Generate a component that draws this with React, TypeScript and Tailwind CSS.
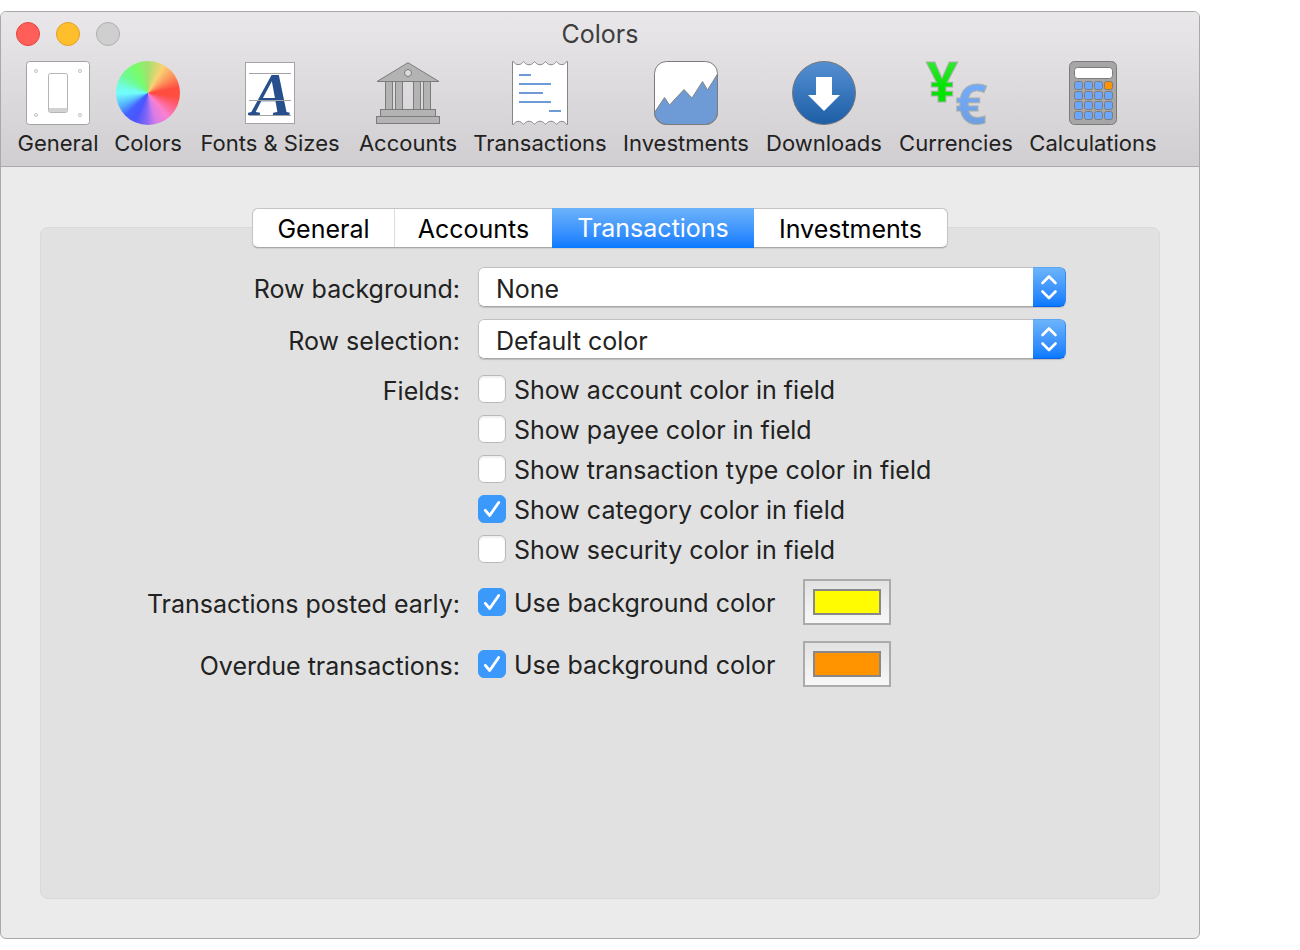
import { useState, type ReactNode } from "react";

function GeneralIcon() {
  return (
    <svg width="64" height="64" viewBox="0 0 64 64" fill="#fff" stroke="#a3a3a3" aria-hidden="true">
      <rect x="0.5" y="0.5" width="63" height="63" rx="3" />
      <g fill="#efefef" stroke="#c9c9c9">
        <circle cx="10" cy="10" r="1.6" />
        <circle cx="54" cy="10" r="1.6" />
        <circle cx="10" cy="54" r="1.6" />
        <circle cx="54" cy="54" r="1.6" />
      </g>
      <rect x="22.5" y="12.5" width="19" height="39" rx="2" stroke="#b5b5b5" />
      <path d="M23 47h18v2.5a1.5 1.5 0 0 1-1.5 1.5h-15a1.5 1.5 0 0 1-1.5-1.5z" fill="#d2d2d2" stroke="none" />
    </svg>
  );
}

function ColorsIcon() {
  return (
    <span className="block size-16 rounded-full bg-[conic-gradient(#a4e070_0deg,#fbd172_30deg,#fba262_50deg,#ff4d40_80deg,#ff4d40_98deg,#ff5f7c_115deg,#fc80cf_140deg,#d77ce6_165deg,#8a68f4_182deg,#4a55ff_205deg,#4560ff_225deg,#55b4ff_245deg,#70fcfb_268deg,#72fcee_280deg,#6efb96_305deg,#78fc68_335deg,#a4e070_360deg)]" />
  );
}

function FontsIcon() {
  return (
    <svg width="50" height="62" viewBox="0 0 50 62" className="overflow-visible" aria-hidden="true">
      <rect x="0.5" y="0.5" width="49" height="61" fill="#fff" stroke="#a3a3a3" />
      <text x="6" y="53" fontSize="62" fontWeight="700" fontStyle="italic" fontFamily="Liberation Serif, serif" fill="#274f8e">
        A
      </text>
      <path d="M4 11.5h42M4 38.5h42M4 53.5h42" stroke="#a3a3a3" />
    </svg>
  );
}

function AccountsIcon() {
  return (
    <svg width="64" height="62" viewBox="0 0 64 62" fill="#b3b3b3" stroke="#7b7b7b" aria-hidden="true">
      <path d="M32 0.7L63 19.5H1z" />
      <circle cx="32" cy="11" r="3.5" fill="#dcdcdc" />
      <rect x="9.5" y="19.5" width="7" height="28" />
      <rect x="19.5" y="19.5" width="7" height="28" />
      <rect x="37.5" y="19.5" width="7" height="28" />
      <rect x="47.5" y="19.5" width="7" height="28" />
      <rect x="4.5" y="47.5" width="55" height="7" />
      <rect x="0.5" y="54.5" width="63" height="7" />
    </svg>
  );
}

function TransactionsIcon() {
  return (
    <svg width="56" height="64" viewBox="0 0 56 64" aria-hidden="true">
      <path
        d="M0.5 0.5h1c2 4 7 4 9 1q1-1.500 2 0c2 3 7 3 9 0q1-1.500 2 0c2 3 7 3 9 0q1-1.500 2 0c2 3 7 3 9 0q1-1.500 2 0c2 3 7 3 9-1h1v63h-1c-2-4-7-4-9-1q-1 1.500-2 0c-2-3-7-3-9 0q-1 1.500-2 0c-2-3-7-3-9 0q-1 1.500-2 0c-2-3-7-3-9 0q-1 1.500-2 0c-2-3-7-3-9 1h-1z"
        fill="#fff"
        stroke="#858585"
      />
      <path d="M7 14h12M7 23h32M7 32h24M7 41h32M37 50h12" stroke="#6e9ad6" strokeWidth="2" />
    </svg>
  );
}

function InvestmentsIcon() {
  return (
    <svg width="64" height="64" viewBox="0 0 64 64" aria-hidden="true">
      <rect x="0.5" y="0.5" width="63" height="63" rx="12" fill="#fff" />
      <path
        d="M0.5 51.5L10.500 36.500L15.500 44L30 28.500L38 37L48.500 20.500L53.500 29L63.500 13V51.500A12 12 0 0 1 51.500 63.500H12.500A12 12 0 0 1 0.500 51.500z"
        fill="#6e9ad6"
        stroke="#858585"
      />
      <rect x="0.5" y="0.5" width="63" height="63" rx="12" fill="none" stroke="#7b7b7b" />
    </svg>
  );
}

function DownloadsIcon() {
  return (
    <svg width="64" height="64" viewBox="0 0 64 64" aria-hidden="true">
      <linearGradient id="download" x1="0" y1="0" x2="0" y2="1">
        <stop offset="0" stopColor="#558fd2" />
        <stop offset="1" stopColor="#1c5ea6" />
      </linearGradient>
      <circle cx="32" cy="32" r="31.5" fill="url(#download)" stroke="#777" />
      <path d="M24 16h16v18h8L32 50L16 34h8z" fill="#fff" />
    </svg>
  );
}

function CurrenciesIcon() {
  return (
    <svg
      width="64"
      height="64"
      viewBox="0 0 64 64"
      className="overflow-visible"
      fontFamily="Open Sans, sans-serif"
      fontWeight="700"
      stroke="#a9b0a9"
      aria-hidden="true"
    >
      <linearGradient id="yen" x1="0" y1="0" x2="0" y2="1">
        <stop offset="0.2" stopColor="#3be83b" />
        <stop offset="0.6" stopColor="#00e400" />
      </linearGradient>
      <linearGradient id="euro" x1="0" y1="0" x2="0" y2="1">
        <stop offset="0.2" stopColor="#74adff" />
        <stop offset="1" stopColor="#6e9ad6" />
      </linearGradient>
      <text x="2" y="41" fontSize="56" fill="url(#yen)">
        ¥
      </text>
      <text x="31" y="63" fontSize="56" fill="url(#euro)">
        €
      </text>
    </svg>
  );
}

function CalculationsIcon() {
  const keys = [0, 1, 2, 3];
  return (
    <svg width="48" height="64" viewBox="0 0 48 64" stroke="#7b7b7b" aria-hidden="true">
      <rect x="0.5" y="0.5" width="47" height="63" rx="5" fill="#a6a6a6" />
      <rect x="5.5" y="6.5" width="38" height="11" rx="3" fill="#fff" />
      {keys.map((row) =>
        keys.map((col) => (
          <rect
            key={`${row}-${col}`}
            x={5.5 + col * 10}
            y={20.5 + row * 10}
            width="8"
            height="8"
            rx="2"
            fill={row === 0 && col === 3 ? "#ff9300" : "#6ba7ff"}
          />
        ))
      )}
    </svg>
  );
}

const tools = [
  { name: "General", width: "w-[98px]", icon: <GeneralIcon /> },
  { name: "Colors", width: "w-[82px]", icon: <ColorsIcon /> },
  { name: "Fonts & Sizes", width: "w-[162px]", icon: <FontsIcon /> },
  { name: "Accounts", width: "w-[114px]", icon: <AccountsIcon /> },
  { name: "Transactions", width: "w-[150px]", icon: <TransactionsIcon /> },
  { name: "Investments", width: "w-[142px]", icon: <InvestmentsIcon /> },
  { name: "Downloads", width: "w-[134px]", icon: <DownloadsIcon /> },
  { name: "Currencies", width: "w-[130px]", icon: <CurrenciesIcon /> },
  { name: "Calculations", width: "w-[144px]", icon: <CalculationsIcon /> },
];

const tabs = [
  { name: "General", width: "w-[142px]" },
  { name: "Accounts", width: "w-[157px]" },
  { name: "Transactions", width: "w-[202px]" },
  { name: "Investments", width: "w-[193px]" },
];

const fields = [
  { label: "Show account color in field", checked: false },
  { label: "Show payee color in field", checked: false },
  { label: "Show transaction type color in field", checked: false },
  { label: "Show category color in field", checked: true },
  { label: "Show security color in field", checked: false },
];

function Checkbox({ label, checked }: { label: string; checked: boolean }) {
  return (
    <label className="flex h-10 items-center gap-2 whitespace-nowrap">
      <span className="grid size-7 shrink-0">
        <input
          type="checkbox"
          defaultChecked={checked}
          className="peer col-start-1 row-start-1 size-7 appearance-none rounded-md border border-[#b9b9b9] bg-white shadow-[inset_0_2px_2px_#f0f0f0] checked:border-[#3b99fc] checked:bg-[#3b99fc] checked:shadow-none"
        />
        <svg
          viewBox="0 0 28 28"
          className="pointer-events-none invisible col-start-1 row-start-1 size-7 peer-checked:visible"
          fill="none"
          stroke="#fff"
          strokeWidth="2.8"
          strokeLinecap="round"
          strokeLinejoin="round"
          aria-hidden="true"
        >
          <path d="M7.3 15.3L11.7 20.500L20.700 7.500" />
        </svg>
      </span>
      <span className="pt-[3px]">{label}</span>
    </label>
  );
}

function Popup({ id, options }: { id: string; options: string[] }) {
  return (
    <div className="grid h-10 w-full max-w-[588px] grid-cols-[1fr_33px] overflow-hidden rounded-md shadow-[0_1px_1px_#bdbdbd]">
      <select
        id={id}
        className="col-span-2 col-start-1 row-start-1 h-10 appearance-none rounded-md border border-[#c0c0c0] border-b-[#a8a8a8] bg-white pt-[3px] pr-10 pl-[17px] text-[#222]"
      >
        {options.map((option) => (
          <option key={option}>{option}</option>
        ))}
      </select>
      <span className="pointer-events-none z-10 col-start-2 row-start-1 flex items-center justify-center rounded-r-md border border-l-0 border-t-[#5ba6f5] border-r-[#2f8bf5] border-b-[#0a62ea] bg-linear-to-b from-[#6cb3fa] to-[#067aff]">
        <svg
          width="18"
          height="26"
          viewBox="0 0 18 26"
          fill="none"
          stroke="#fff"
          strokeWidth="2.6"
          strokeLinecap="round"
          strokeLinejoin="round"
          aria-hidden="true"
        >
          <path d="M2.5 9L9 2.500L15.500 9M2.500 17.500L9 24L15.500 17.500" />
        </svg>
      </span>
    </div>
  );
}

function Row({ title, children }: { title: ReactNode; children: ReactNode }) {
  return (
    <div className="grid grid-cols-[minmax(0,419px)_minmax(0,1fr)] items-start gap-x-[18px]">
      <div className="pt-0.5 text-right leading-10 whitespace-nowrap">{title}</div>
      {children}
    </div>
  );
}

function ColorRow({ title, color }: { title: string; color: string }) {
  return (
    <Row title={<span className="leading-[46px]">{title}</span>}>
      <div className="flex items-center gap-7">
        <Checkbox label="Use background color" checked />
        <input
          type="color"
          aria-label={`${title} background color`}
          defaultValue={color}
          className="h-[46px] w-[88px] appearance-none border-2 border-[#ababab] bg-linear-to-b from-[#e2e2e2] to-[#f8f8f8] p-2 [&::-webkit-color-swatch]:rounded-none [&::-webkit-color-swatch]:border-2 [&::-webkit-color-swatch]:border-[#888] [&::-webkit-color-swatch-wrapper]:p-0"
        />
      </div>
    </Row>
  );
}

function App() {
  const [tab, setTab] = useState("Transactions");

  return (
    <div className="flex min-h-screen bg-white py-[11px] font-['Inter',sans-serif] text-[25px] text-[#222]">
      <main className="flex w-full max-w-[1200px] flex-col overflow-hidden rounded-md border border-[#a9a9a9] bg-[#ebebeb]">
        <header className="border-b border-[#a9a9ab] bg-linear-to-b from-[#e9e7e9] to-[#d0ced0]">
          <div className="grid h-[43px] grid-cols-[1fr_auto_1fr] items-center px-[15px]">
            <div className="flex gap-4">
              <button aria-label="Close" className="size-6 rounded-full border border-[#e2463f] bg-[#ff5f58]" />
              <button aria-label="Minimize" className="size-6 rounded-full border border-[#dfa023] bg-[#ffbf2d]" />
              <button aria-label="Zoom" className="size-6 rounded-full border border-[#b0b0b0] bg-[#cfcfcf]" />
            </div>
            <h1 className="pt-0.5 text-[#3d3d3d]">Colors</h1>
          </div>
          <nav className="flex px-2 pt-1.5 pb-2">
            {tools.map((tool) => (
              <button
                key={tool.name}
                className={`${tool.width} flex shrink-0 flex-col items-center gap-1 text-[22px] leading-[29px] whitespace-nowrap`}
              >
                <span className="flex h-16 items-center">{tool.icon}</span>
                {tool.name}
              </button>
            ))}
          </nav>
        </header>

        <div className="flex grow flex-col px-[39px] pt-[41px] pb-[39px]">
          <div
            className="z-10 mx-auto -mb-[21px] flex h-10 rounded-md border border-[#c4c4c4] border-b-[#a8a8a8] bg-white shadow-[0_1px_1px_#cfcfcf]"
            role="tablist"
          >
            {tabs.map((item) => (
              <button
                key={item.name}
                role="tab"
                aria-selected={tab === item.name}
                onClick={() => setTab(item.name)}
                className={`${item.width} pt-0.5 ${
                  tab === item.name
                    ? "-my-px bg-linear-to-b from-[#6cb3fa] to-[#067aff] text-white"
                    : "rounded-md text-black first:rounded-r-none first:border-r first:border-[#dedede]"
                }`}
              >
                {item.name}
              </button>
            ))}
          </div>

          <section className="flex grow flex-col rounded-lg border border-[#d9d9d9] bg-[#e1e1e1] pt-[39px]">
            <div className="flex flex-col gap-2.5">
              <Row title={<label htmlFor="row-background">Row background:</label>}>
                <Popup id="row-background" options={["None", "Alternating"]} />
              </Row>
              <Row title={<label htmlFor="row-selection">Row selection:</label>}>
                <Popup id="row-selection" options={["Default color", "Custom color"]} />
              </Row>
            </div>
            <div className="mt-2">
              <Row title="Fields:">
                <div>
                  {fields.map((field) => (
                    <Checkbox key={field.label} label={field.label} checked={field.checked} />
                  ))}
                </div>
              </Row>
            </div>
            <div className="mt-[10px] flex flex-col gap-3.5">
              <ColorRow title="Transactions posted early:" color="#fffb00" />
              <ColorRow title="Overdue transactions:" color="#ff9300" />
            </div>
          </section>
        </div>
      </main>
    </div>
  );
}

export default App;
